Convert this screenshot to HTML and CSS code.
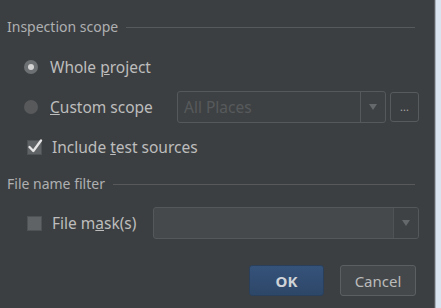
FILE: index.html
```html
<!DOCTYPE html>
<html>
<head>
<meta charset="utf-8">
<link rel="stylesheet" href="styles.css">
</head>
<body>
<div class="dialog">
  <div class="content">
    <div class="section-header"><span class="section-title">Inspection scope</span><span class="rule"></span></div>
    <div class="row">
      <span class="radio radio-on"><span class="dot"></span></span>
      <span class="label">Whole <u>p</u>roject</span>
    </div>
    <div class="row">
      <span class="radio"></span>
      <span class="label label-custom"><u>C</u>ustom scope</span>
      <div class="combo combo-disabled">
        <span class="combo-text">All Places</span>
        <span class="combo-arrow"><span class="tri"></span></span>
      </div>
      <div class="browse"><span class="dots">...</span></div>
    </div>
    <div class="row">
      <span class="check check-on"><svg width="17" height="15" viewBox="0 0 17 15"><path d="M2.5 8 L6.3 12 L14 1.5" fill="none" stroke="#e6e6e6" stroke-width="2.3" stroke-linecap="round" stroke-linejoin="round"/></svg></span>
      <span class="label">Include <u>t</u>est sources</span>
    </div>
    <div class="section-header section-header-2"><span class="section-title">File name filter</span><span class="rule"></span></div>
    <div class="row row-mask">
      <span class="check"></span>
      <span class="label label-mask">File m<u>a</u>sk(s)</span>
      <div class="combo combo-mask">
        <span class="combo-text"></span>
        <span class="combo-arrow"><span class="tri"></span></span>
      </div>
    </div>
    <div class="buttons">
      <button class="btn btn-ok">OK</button>
      <button class="btn btn-cancel">Cancel</button>
    </div>
  </div>
  <div class="edge"></div>
</div>
</body>
</html>
```

FILE: styles.css
```css
html, body {
  margin: 0;
  padding: 0;
  width: 441px;
  height: 308px;
  overflow: hidden;
  background: #3c3f41;
  font-family: "Noto Sans", "DejaVu Sans", sans-serif;
  font-size: 15.5px;
  color: #bbbbbb;
}
.dialog {
  display: flex;
  width: 441px;
  height: 308px;
}
.content {
  width: 434px;
  box-sizing: border-box;
  padding: 19px 15px 0 7px;
  display: flex;
  flex-direction: column;
}
.edge {
  flex: 1;
  border-left: 1px solid #5b5e61;
  box-shadow: inset 1px 0 0 #a9b2bc;
  background: #dae4f0;
}
.section-header {
  display: flex;
  align-items: center;
  height: 16px;
  margin-right: 4px;
}
.section-title {
  color: #aeb0b2;
  font-size: 14px;
  line-height: 16px;
  white-space: nowrap;
}
.rule {
  flex: 1;
  height: 0;
  border-top: 1px solid #57595b;
  margin-left: 8px;
}
.row {
  display: flex;
  align-items: center;
  height: 40px;
  padding-left: 17px;
}
.section-header + .row {
  margin-top: 12px;
}
.label {
  white-space: nowrap;
  color: #bdbdbd;
  line-height: 20px;
}
.radio {
  width: 14px;
  height: 14px;
  border-radius: 50%;
  background: #57595b;
  margin-right: 12px;
  display: flex;
  align-items: center;
  justify-content: center;
  flex: none;
}
.radio-on {
  background: #6d7072;
}
.dot {
  width: 6px;
  height: 6px;
  border-radius: 50%;
  background: #d4d4d4;
}
.label-custom {
  width: 127px;
}
.combo {
  display: flex;
  height: 32px;
  box-sizing: border-box;
  border: 1px solid #56595b;
  border-radius: 3px;
  overflow: hidden;
}
.combo-disabled {
  width: 209px;
  background: #3e4143;
}
.combo-text {
  flex: 1;
  padding-left: 6px;
  line-height: 30px;
  color: #575a5c;
}
.combo-arrow {
  width: 24px;
  border-left: 1px solid #56595b;
  display: flex;
  align-items: center;
  justify-content: center;
}
.tri {
  width: 0;
  height: 0;
  border-left: 4px solid transparent;
  border-right: 4px solid transparent;
  border-top: 6px solid #66696b;
}
.browse {
  width: 29px;
  height: 30px;
  box-sizing: border-box;
  margin-left: 4px;
  border: 1px solid #585b5d;
  border-radius: 3px;
  display: flex;
  align-items: center;
  justify-content: center;
}
.dots {
  color: #a8a8a8;
  font-size: 11px;
  line-height: 8px;
  letter-spacing: 0;
}
.check {
  width: 15px;
  height: 15px;
  background: #606365;
  border: 1px solid #4f5254;
  box-sizing: border-box;
  margin-left: 3px;
  margin-right: 10px;
  flex: none;
  position: relative;
}
.check svg {
  position: absolute;
  left: -1px;
  top: -2px;
}
.section-header-2 {
  margin-top: 9px;
}
.section-header + .row-mask {
  margin-top: 15px;
}
.row-mask {
  height: 32px;
}
.label-mask {
  width: 101px;
}
.combo-mask {
  width: 266px;
  background: #46494b;
  border-color: #55585a;
}
.combo-mask .combo-arrow {
  background: #3f4244;
  border-left-color: #505355;
}
.buttons {
  display: flex;
  justify-content: flex-end;
  gap: 16px;
  margin-top: 26px;
  margin-right: 3px;
}
.btn {
  height: 31px;
  box-sizing: border-box;
  border-radius: 3px;
  font-family: "Noto Sans", "DejaVu Sans", sans-serif;
  font-size: 15px;
  padding: 0;
}
.btn-ok {
  width: 75px;
  background: linear-gradient(#35527a, #2d4768);
  border: 1px solid #2a3f5a;
  color: #cfd3d8;
  font-weight: bold;
}
.btn-cancel {
  width: 76px;
  background: #45484a;
  border: 1px solid #5c5f61;
  color: #bbbbbb;
}
```
